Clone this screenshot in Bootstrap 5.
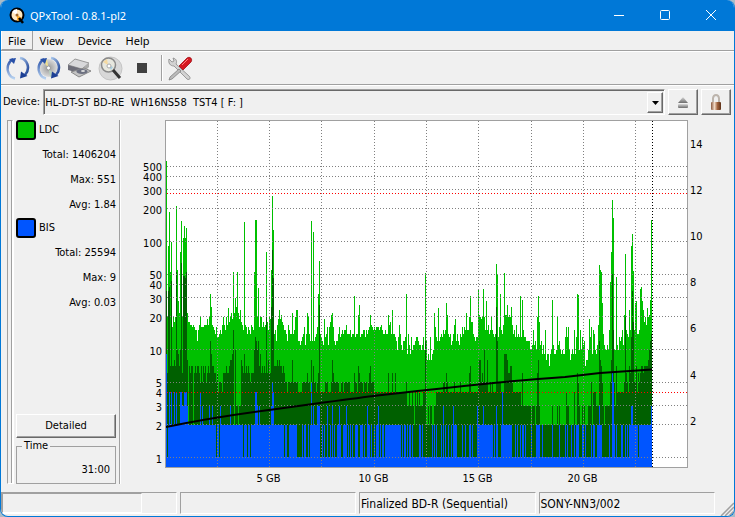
<!DOCTYPE html>
<html lang="en">
<head>
<meta charset="utf-8">
<meta name="viewport" content="width=device-width, initial-scale=1">
<title>QPxTool - 0.8.1-pl2</title>
<link href="https://cdn.jsdelivr.net/npm/bootstrap@5.3.0/dist/css/bootstrap.min.css" rel="stylesheet">
<style>
:root{--face:#f0f0f0;--edge:#a0a0a0;--dark:#696969;--blue:#0078d7}
body{background:#a9bcc8;font:11px/16px "DejaVu Sans Condensed","Noto Sans",sans-serif;color:#000}
.app-window{background:var(--face);border:1px solid var(--blue);border-top:0;border-radius:8px;overflow:hidden}
.title-bar{background:var(--blue);color:#fff;height:31px}
.title-bar h1{font:11px/31px "Noto Sans",sans-serif}
.win-btn{width:46px;height:31px;border:0;background:none;color:#fff;padding:0}
.menu-row{height:20px;font:11px/19px "Noto Sans",sans-serif;border-bottom:1px solid var(--edge)}
.menu-row a{color:#000;text-decoration:none;padding:0 6px;border:1px solid transparent;border-top:0}
.menu-row a.hot{border-color:#a0a0a0;border-left-color:#fff}
.tool-row{height:34px;border-top:1px solid #fff;border-bottom:1px solid var(--edge)}
.tool-btn{width:31px;height:31px;border:0;background:none;padding:0}
.tool-btn.stop{width:26px}
.tool-sep{width:2px;height:26px;margin:0 4px 0 6px;border-left:1px solid var(--edge);border-right:1px solid #fff}
.raised{background:var(--face);border:1px solid;border-color:#fff #696969 #696969 #fff;box-shadow:inset -1px -1px #a0a0a0;padding:0;color:#000;border-radius:0}
.device-row{border-top:1px solid #fff;padding:3px 3px 0 2px;gap:3px}
.device-box{height:26px;border:1px solid;border-color:#a0a0a0 #fff #fff #a0a0a0;box-shadow:inset 1px 1px #696969;padding:2px 1px 1px 0}
.device-box select{appearance:none;border:0;background:none;outline:0;padding:0 1px;font:inherit;color:#000}
.drop-mark{width:16px;height:21px;pointer-events:none}
.side-btn{width:30px;height:26px}
.main-row{padding:5px 4px 8px 6px;gap:3px}
.grip-bar{width:6px;border:1px solid;border-color:#a0a0a0 #fff #fff #a0a0a0;box-shadow:inset -1px 0 #a0a0a0,1px 0 #fff}
.stats{width:100px}
.side-line{width:2px;border-left:1px solid var(--edge);border-right:1px solid #fff}
.swatch{width:20px;height:20px;border:2px solid #000;border-radius:3px;margin-right:3px}
.swatch.ldc{background:#00c000}
.swatch.bis{background:#0055ff}
.stat{height:25px;padding-top:4px;line-height:21px;text-align:right}
.bis-head{margin-top:3px}
.detail-btn{height:24px}
.time-box{border:1px solid var(--edge);box-shadow:none;height:44px;margin-top:2px;padding:0 5px}
.time-box legend{float:none;width:auto;font-size:11px;line-height:12px;margin:0 0 10px;padding:0 2px}
.plot{margin:0 0 0 10px}
.plot svg{display:block;width:100%;height:364px}
.plot text{font-size:11px}
.status-row{height:24px;gap:3px;font-size:12px}
.status-cell{border:1px solid;border-color:#a0a0a0 #fff #fff #a0a0a0;height:22px;line-height:22px;padding-left:1px}
.progress-slot{width:140px;height:20px;border:1px solid;border-color:#a0a0a0 #fff #fff #a0a0a0}
.size-grip{width:16px}
</style>
<script src="https://cdn.jsdelivr.net/npm/bootstrap@5.3.0/dist/js/bootstrap.bundle.min.js"></script>
</head>
<body>
<svg width="0" height="0" class="position-absolute" aria-hidden="true"><defs>
<linearGradient id="arc" x1="0" y1="0" x2="1" y2="1"><stop offset="0" stop-color="#a9c8ec"/><stop offset="1" stop-color="#1c3f94"/></linearGradient>
<linearGradient id="arcL" x1="0" y1="1" x2="0" y2="0"><stop offset="0" stop-color="#b7d2f0"/><stop offset="1" stop-color="#2850a8"/></linearGradient>
<radialGradient id="disc"><stop offset="0" stop-color="#fff"/><stop offset=".25" stop-color="#a8a8a8"/><stop offset="1" stop-color="#dcdcdc"/></radialGradient>
<linearGradient id="brass" x1="0" x2="1"><stop offset="0" stop-color="#8a5a40"/><stop offset=".35" stop-color="#f0d8c4"/><stop offset=".65" stop-color="#a0623c"/><stop offset="1" stop-color="#5c3018"/></linearGradient>
<linearGradient id="steel" x1="0" y1="0" x2="0" y2="1"><stop offset="0" stop-color="#d8d8d8"/><stop offset="1" stop-color="#6c6c6c"/></linearGradient>
<g id="arrows"><path d="M8 3C3 6 1 12 4 18C5 20 7 22 10 22.500" fill="none" stroke="url(#arcL)" stroke-width="2.400"/><path d="M4 3 11 2 9 8Z" fill="#2850a8"/><path d="M15 2C22 3 26 12 20 19" fill="none" stroke="url(#arc)" stroke-width="2.600"/><path d="M15 22.500 16 15.500 22.500 20Z" fill="#1c3f94"/></g>
</defs></svg>
<div class="app-window d-flex flex-column min-vh-100">
<header class="title-bar d-flex align-items-center">
<svg class="ms-2" width="17" height="17" viewBox="0 0 17 17" aria-hidden="true"><circle cx="8" cy="8" r="6.500" fill="#ffe9c0" stroke="#000" stroke-width="2"/><path d="M8 8 3 5A6 6 0 0 1 8 2Z" fill="#fff"/><path d="M8 8 13 11A6 6 0 0 1 8 14Z" fill="#ffb030"/><circle cx="8" cy="8" r="1.500" fill="#a06a30"/><path d="m10 11 4 5" stroke="#000" stroke-width="2.500"/></svg>
<h1 class="m-0 ms-1 me-auto">QPxTool - 0.8.1-pl2</h1>
<button class="win-btn" aria-label="Minimize"><svg width="11" height="11"><path d="M0 5.500h10" stroke="#fff"/></svg></button>
<button class="win-btn" aria-label="Maximize"><svg width="11" height="11"><rect x=".5" y=".5" width="9" height="9" rx="1" fill="none" stroke="#fff"/></svg></button>
<button class="win-btn" aria-label="Close"><svg width="11" height="11"><path d="m0 0 10 10M10 0 0 10" stroke="#fff"/></svg></button>
</header>
<nav class="menu-row d-flex" aria-label="Menu"><a class="hot" href="#">File</a><a href="#">View</a><a href="#">Device</a><a href="#">Help</a></nav>
<div class="tool-row d-flex align-items-center ps-1" role="toolbar" aria-label="Tools">
<button class="tool-btn text-start" aria-label="Rescan bus"><svg width="25" height="25"><use href="#arrows"/></svg></button>
<button class="tool-btn text-start" aria-label="Reload media"><svg width="25" height="25"><circle cx="12.500" cy="12" r="9" fill="url(#disc)"/><path d="M12.500 12 7 5 11 3Z" fill="#f0e090"/><path d="M12.500 12 18 19 14 21Z" fill="#b8d0c0"/><circle cx="12.500" cy="12" r="2" fill="#fff" stroke="#999"/><use href="#arrows"/></svg></button>
<button class="tool-btn text-start" aria-label="Device info"><svg width="26" height="25"><path d="M1 9 8 3 22 7 15 13Z" fill="#d8d8da" stroke="#999"/><path d="M1 9 15 13V18L1 14Z" fill="#6d6d78"/><path d="M15 13 22 7V11L15 18Z" fill="#aaa"/><path d="m4 16 13-4 7 3-12 6Z" fill="#c4c4c4" stroke="#888"/><ellipse cx="15" cy="15.500" rx="5.500" ry="2.500" fill="#6c7080"/><ellipse cx="16" cy="15" rx="2" ry="1" fill="#ddd"/></svg></button>
<button class="tool-btn text-start" aria-label="Scan disc"><svg width="26" height="25"><circle cx="12.500" cy="12.500" r="11.500" fill="#d8d8d8" stroke="#c4c4c4"/><circle cx="10.500" cy="9" r="7" fill="#e7e7de" stroke="#8a8a8a" stroke-width="1.500"/><path d="M10 9 5 6 9 3Z" fill="#f5d9a0"/><path d="m10 9 5 2-2 3Z" fill="#a8cfe0"/><circle cx="11" cy="10" r="2" fill="#fff" stroke="#aaa"/><path d="m15 14 7 8" stroke="#333" stroke-width="3"/></svg></button>
<button class="tool-btn stop" aria-label="Stop"><svg width="10" height="11"><rect width="10" height="10" fill="#404040"/></svg></button>
<div class="tool-sep"></div>
<button class="tool-btn text-start" aria-label="Preferences"><svg width="26" height="25"><path d="M2 3 5 6 7 5 6 2C10 3 10 6 9 8L22 20C25 23 21 25 19 22L7 10C3 10 1 7 2 3Z" fill="#d2d2d2" stroke="#888" stroke-width=".8"/><path d="m12 13 2 2-9 8-3 1 1-3Z" fill="#bbb" stroke="#777" stroke-width=".7"/><path d="M12 10 20 2C23 0 26 3 24 6L16 14Z" fill="#d61820" stroke="#a01018" stroke-width=".8"/><path d="m15 9 6-6" stroke="#ff8080"/></svg></button>
</div>
<div class="device-row d-flex align-items-center">
<label for="device">Device:</label>
<div class="device-box d-flex flex-grow-1"><select id="device" class="flex-grow-1"><option>HL-DT-ST BD-RE&nbsp; WH16NS58&nbsp; TST4 [ F: ]</option></select><span class="drop-mark raised d-flex align-items-center justify-content-center"><svg width="7" height="4"><path d="M0 0h7L3.500 4Z"/></svg></span></div>
<button class="raised side-btn" aria-label="Eject"><svg width="12" height="14"><path d="M1 8 6 2 11 8Z" fill="url(#steel)"/><rect x="1" y="9" width="10" height="4" rx="1" fill="url(#steel)"/></svg></button>
<button class="raised side-btn" aria-label="Lock"><svg width="12" height="17"><path d="M3 9V4.500a3 3.500 0 0 1 6 0V9" fill="none" stroke="#bcb4ac" stroke-width="2"/><rect x="1" y="8" width="10" height="8" rx="1" fill="url(#brass)"/></svg></button>
</div>
<main class="main-row d-flex flex-grow-1">
<div class="grip-bar"></div>
<section class="stats d-flex flex-column" aria-label="Error totals">
<div class="d-flex align-items-center"><span class="swatch ldc"></span>LDC</div>
<div class="stat">Total: 1406204</div><div class="stat">Max: 551</div><div class="stat">Avg: 1.84</div>
<div class="bis-head d-flex align-items-center"><span class="swatch bis"></span>BIS</div>
<div class="stat">Total: 25594</div><div class="stat">Max: 9</div><div class="stat">Avg: 0.03</div>
<button class="raised detail-btn mt-auto">Detailed</button>
<fieldset class="time-box"><legend>Time</legend><div class="text-end">31:00</div></fieldset>
</section>
<div class="side-line"></div>
<figure class="plot flex-grow-1"><svg id="chart" viewBox="134 120 596 364" preserveAspectRatio="none" role="img" aria-label="LDC and BIS errors against disc position"></svg></figure>
</main>
<footer class="status-row row g-0 flex-nowrap">
<div class="status-cell col p-0"><div class="progress-slot"></div></div><div class="status-cell col"></div><div class="status-cell col">Finalized BD-R (Sequential)</div><div class="status-cell col">SONY-NN3/002</div>
<div class="size-grip align-self-end d-flex"><svg width="16" height="14" aria-hidden="true"><path d="M3 14 16 1M7 14 16 5M11 14 16 9" stroke="#a0a0a0" stroke-width="1.500"/></svg></div>
</footer>
</div>
<script>
// Largest LDC count in each one-pixel slice of the disc
const ldc = `551 20 90 188 52 100 16 20 18 20 213 54 28 22 80 155 20 108 140 108 134 22 18 18 17 17 16 17 16 15 15 12 15 17 20 16 16 16 17 17 17 19 17 20 33 25 17 16 15 14 16 13 13 14 15 14 17 20 17 15 20 17 24 18 20 22 19 52 22 30 25 52 22 19 23 18 17 15 152 17 16 14 16 15 14 17 16 15 52 158 158 20 37 16 20 20 16 18 16 17 80 18 15 20 19 55 265 128 14 15 12 17 19 23 19 21 18 17 15 15 14 12 17 15
14 14 22 14 15 20 23 23 12 12 11 12 13 14 16 11 14 22 20 14 12 155 12 123 12 13 14 16 33 66 14 13 12 11 19 13 14 16 11 16 18 21 22 16 12 11 12 12 14 16 13 14 15 14 15 15 17 14 14 14 15 13 14 14 31 13 14 14 21 26 13 14 14 15 15 13 15 14 15 16 21 17 16 15 16 15 16 16 16 15 16 17 15 14 14 15 14 14 21 17 18 14 23 14 14 13 12 10 13 17 14 11 10 12 12 13 33 9 14 11 9 13 10 11 11 12 13 13 12 11 11 10 11 13 10
51 12 8 9 8 13 8 9 10 22 16 13 12 24 12 13 14 13 15 14 15 27 21 14 13 14 11 12 14 17 19 12 14 12 11 14 13 16 14 16 15 22 15 15 20 31 18 18 14 13 12 13 13 36 21 20 19 20 36 20 15 28 15 17 14 15 20 15 14 13 14 62 50 13 16 33 15 14 17 51 21 21 26 20 21 20 25 17 14 15 13 17 13 14 13 31 13 29 15 13 13 12 12 12 12 10 10 11 15 11 12 10 20 31 18 11 12 9 11 9 15 8 9 9 7 9 10 29 11 9 9 10 20 11 12 10 9 10 9 9
13 16 13 16 10 8 9 10 9 15 9 13 33 32 10 15 10 13 11 12 7 8 8 10 19 13 16 9 15 14 10 9 11 17 60 54 52 27 14 11 10 10 11 10 15 42 80 242 165 10 10 47 11 10 13 12 13 15 11 21 77 15 14 13 23 15 91 117 53 15 27 28 14 14 15 36 38 28 23 18 20 17 24 20 21 29 158`.split(/\s+/).map(Number);

// Runs are written as "start:value,value,..."
function fill(target, text) {
  text.trim().split(/\s+/).forEach(run => {
    const [start, list] = run.split(':');
    list.split(',').forEach((v, k) => { target[+start + k] = +v; });
  });
}
// Average LDC level
const avg = ldc.map((v, i) => i < 120 ? 6 : i < 208 ? 5 : i < 240 ? 4 : i < 270 ? 3 : i < 357 ? 4 : i < 374 ? 3 : i < 452 ? 2 : 4);
fill(avg, `0:35,6,35,38,7,43,7,7,8,7,52,10,9,7,10,63,6,48,48,46,52,8,7,7,6,7,7,6,6,7,6,7,7,6,5,7,5,7,6,7,5,6,7,6,12,9,7,7,6,6,5,6,4,5,5,5,4,6,6,6,7,6,6,7,8,8,9,15,9,10,10,15,9,10,9,8,7,6,9,6,7,6,7,6,5,6,6,6,10,13,12,10,12,7,9,6,7,6,7,6,20,6,8,6,6,25,84,46,7,7,7,8,7,8,7,7,6,7,6,5,5,4,5,5
126:8 132:4,4,4,4 141:6 144:4,8,5,7 150:4 152:6,26,4,4,4,4,4 162:4,4,4,5,8,6,5 173:4,4 177:4 184:4,4,4,4,5 188:6,5,5,4,7,6 197:4 201:4 203:6,7,5 222:6 226:6 229:6 240:5,3,3,4,3,3,4,3,2,4,3,4,3,4,3,3,3,4,4,12
260:2,2,3,2,3,3,2,2,3,3,4,4 277:5,5,4,6,5 288:5 294:5 303:6,7 312:5,8,8,5,6,5,10,5,5,8 324:5,4,5 330:25,12,5,5,5 338:9,9,9,8,6,6,7,7,5 355:3,6 360:3,3 363:3 365:2 369:2 371:6,8 386:3 391:3 393:3
400:4,3,3 408:4 411:6,5,3 416:3 418:3 422:3,3,3,5,2,4,4,4,3,3,3,12,8,7,5,3,2 439:3,3,3,3,3,5,8,50,15,5,3,7,4 458:5,20,6,5,4,7,6,13,35,18,5,5,7,4,6,5,6,7,7,6,7,7,7,7,8,10,12,14`);
// Slices whose average drops low enough to uncover the peak bars
fill(avg, '22:2 27:2 68:2 70:3,3,2,3,3');
// BIS level
const bis = ldc.map((v, i) => i < 258 ? 2 : 1);
fill(bis, `0:9,1,2,4,2,4,2,2,4,2,4,2,2,2,4,4,3,3,4,4,4,3 34:4 36:3 43:3 46:3 50:1 53:1,3 64:3 77:1 81:1 84:1 89:4,4,3,2,3 105:3,5,4 118:1 121:1,1
131:1,1,1,1,1 137:1 140:1,1 143:1,2,5,2,3 151:3,3,3,1,1 157:1 159:1,1,3,1,1 165:1,3,1 169:1,1 173:3 175:1,1 180:3,1 183:1 185:1 187:1,1 192:1,1 197:1 199:1,1,3 204:1 206:1,1,2,1 212:3,1,2,1 218:1 235:1 237:1 240:1 242:1 245:1 247:1,1,1,1,1,1 255:1 257:1
266:2 268:2 270:2 275:2 277:3 279:2 282:2 285:2 287:3,2,2,2 296:2 299:2 303:2,2 306:2 311:3,2,2,2,2,2,3,2,2,2,2,2,2,2,2,2 328:2 330:3,2 335:2,4,2,2,2,2,2,2,2,2,2 349:2 351:2 354:2 356:2,2 359:2 365:2 370:2,2,2,2 376:2 386:2 393:2
399:2 401:2 405:2 408:2 410:2,2,2 416:2,2 419:2 425:2 427:2,2 431:2,2,3,2,2 443:2 446:6,5,2 450:2 455:2,2 459:2 461:2 463:2,2,3,3,2,2,2,2,2,1,2,2,2,2,2,2,2,2,2,2,2,2,3`);

const scaleY = v => 457.5 - 108 * Math.log10(v);
const bars = (data, colour) => `<path fill="${colour}" shape-rendering="crispEdges" d="${data.slice(0, 486).map((v, i) => {
  const y = Math.round(scaleY(v));
  return `M${166 + i} ${v === 1 ? 457 : y}h1V467h-1Z`;
}).join('')}"/>`;
const rule = (d, c) => `<path d="${d}" stroke="${c}" stroke-dasharray="1 2" fill="none"/>`;
const gridX = [217.5, 269.5, 321.5, 374.5, 426.5, 478.5, 531.5, 583.5, 635.5];
const ticks = [1, 2, 3, 4, 5, 10, 20, 30, 40, 50, 100, 200, 300, 400, 500];
let out = '<rect x="165.5" y="120.500" width="522" height="347" fill="#fff"/>';
out += bars(ldc, '#00c000') + bars(avg, '#006000') + bars(bis, '#0055ff');
out += gridX.map(x => rule(`M${x} 121V467`, '#808080')).join('');
out += ticks.filter(v => v !== 4).map(v => rule(`M167 ${Math.floor(scaleY(v)) + .5}H687`, '#808080')).join('');
out += rule('M167 193.5H687', '#ff0000') + rule('M167 392.5H687', '#ff0000') + rule('M652.5 121V467', '#000');
out += '<path d="M166 427C195 421 230 415 269 410S340 400 374 396 490 382 565 377L600 373 652 369.500" fill="none" stroke="#000" stroke-width="2"/>';
out += '<rect x="165.500" y="120.500" width="522" height="347" fill="none" stroke="#a0a0a0"/>';
ticks.forEach(v => { out += `<text x="162" y="${Math.round(scaleY(v)) + 5}" text-anchor="end">${v}</text>`; });
[2, 4, 6, 8, 10, 12, 14].forEach(v => { out += `<text x="690" y="${Math.round(471 - 23.1 * v)}">${v}</text>`; });
[5, 10, 15, 20].forEach((v, k) => { out += `<text x="${gridX[k * 2 + 1] - 1}" y="482" text-anchor="middle">${v} GB</text>`; });
document.getElementById('chart').innerHTML = out;
</script>
</body>
</html>
